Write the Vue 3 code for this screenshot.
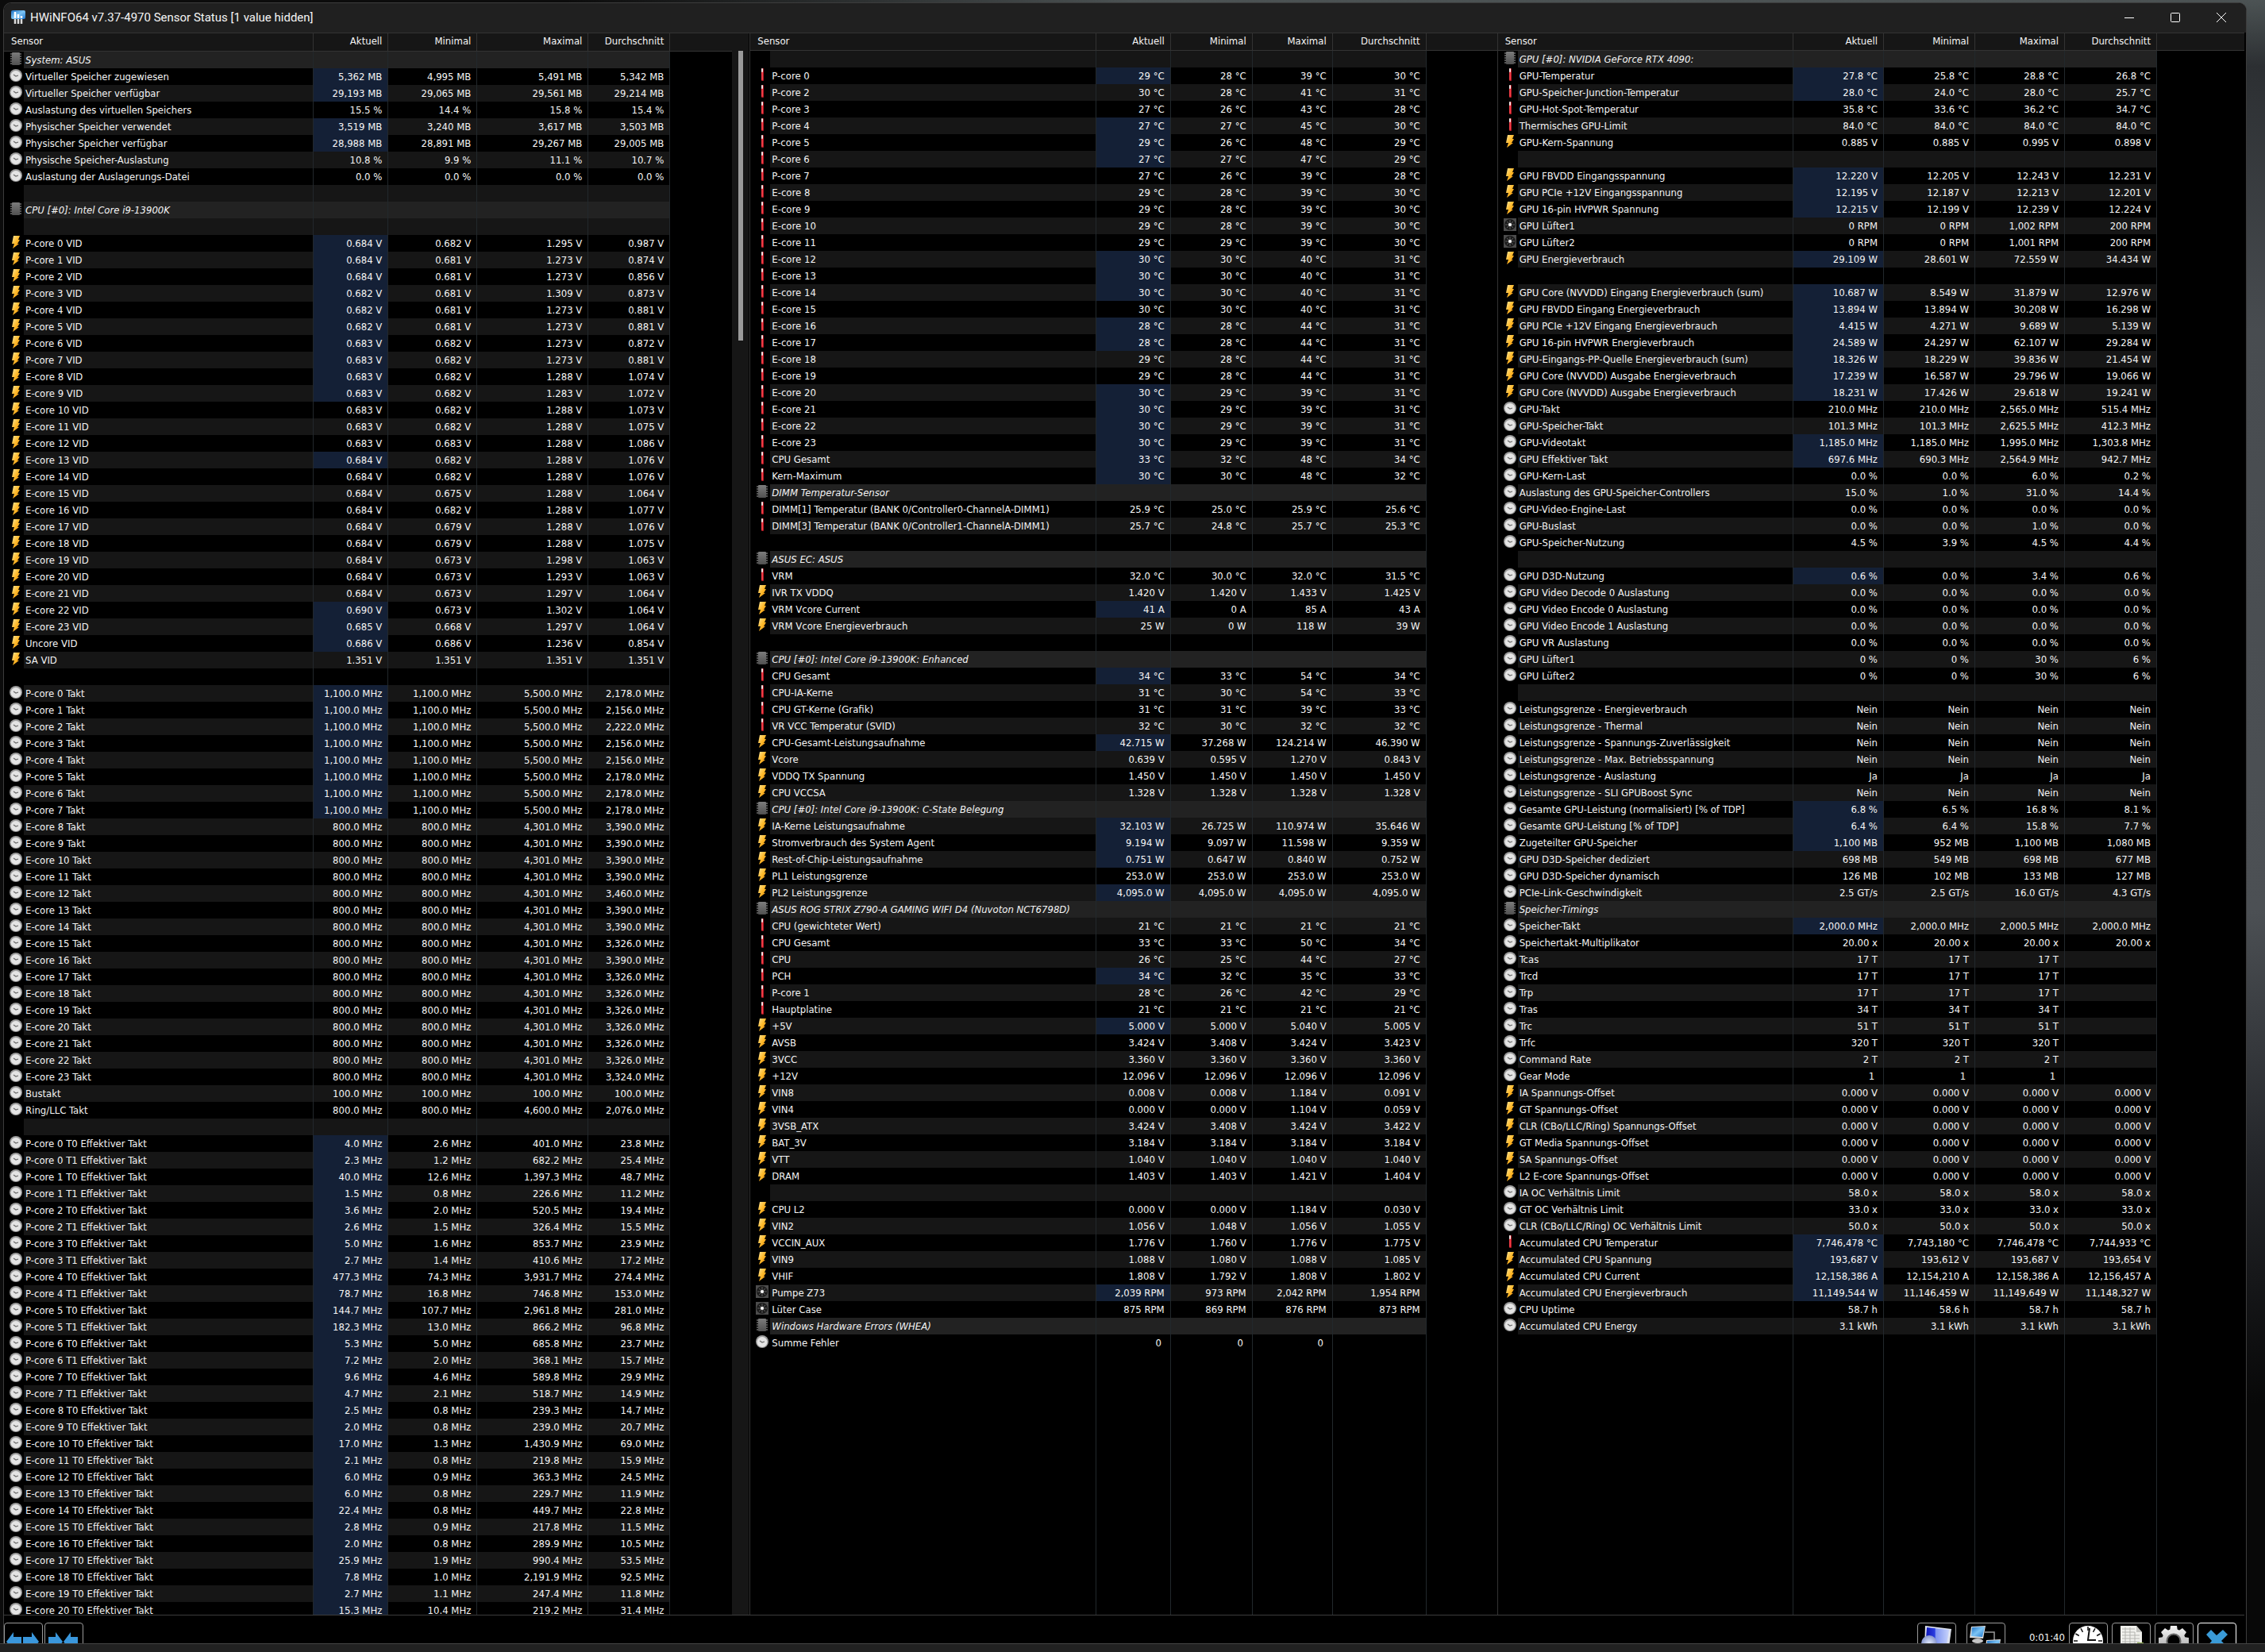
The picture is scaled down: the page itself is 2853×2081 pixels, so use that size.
<script setup>
const memory = `
g|System: ASUS
c|Virtueller Speicher zugewiesen|*5,362 MB|4,995 MB|5,491 MB|5,342 MB
c|Virtueller Speicher verfügbar|*29,193 MB|29,065 MB|29,561 MB|29,214 MB
c|Auslastung des virtuellen Speichers|15.5 %|14.4 %|15.8 %|15.4 %
c|Physischer Speicher verwendet|*3,519 MB|3,240 MB|3,617 MB|3,503 MB
c|Physischer Speicher verfügbar|*28,988 MB|28,891 MB|29,267 MB|29,005 MB
c|Physische Speicher-Auslastung|10.8 %|9.9 %|11.1 %|10.7 %
c|Auslastung der Auslagerungs-Datei|0.0 %|0.0 %|0.0 %|0.0 %
-
g|CPU [#0]: Intel Core i9-13900K
-
b|P-core 0 VID|*0.684 V|0.682 V|1.295 V|0.987 V
b|P-core 1 VID|*0.684 V|0.681 V|1.273 V|0.874 V
b|P-core 2 VID|*0.684 V|0.681 V|1.273 V|0.856 V
b|P-core 3 VID|*0.682 V|0.681 V|1.309 V|0.873 V
b|P-core 4 VID|*0.682 V|0.681 V|1.273 V|0.881 V
b|P-core 5 VID|*0.682 V|0.681 V|1.273 V|0.881 V
b|P-core 6 VID|*0.683 V|0.682 V|1.273 V|0.872 V
b|P-core 7 VID|*0.683 V|0.682 V|1.273 V|0.881 V
b|E-core 8 VID|*0.683 V|0.682 V|1.288 V|1.074 V
b|E-core 9 VID|*0.683 V|0.682 V|1.283 V|1.072 V
b|E-core 10 VID|0.683 V|0.682 V|1.288 V|1.073 V
b|E-core 11 VID|0.683 V|0.682 V|1.288 V|1.075 V
b|E-core 12 VID|0.683 V|0.683 V|1.288 V|1.086 V
b|E-core 13 VID|*0.684 V|0.682 V|1.288 V|1.076 V
b|E-core 14 VID|0.684 V|0.682 V|1.288 V|1.076 V
b|E-core 15 VID|0.684 V|0.675 V|1.288 V|1.064 V
b|E-core 16 VID|0.684 V|0.682 V|1.288 V|1.077 V
b|E-core 17 VID|0.684 V|0.679 V|1.288 V|1.076 V
b|E-core 18 VID|0.684 V|0.679 V|1.288 V|1.075 V
b|E-core 19 VID|0.684 V|0.673 V|1.298 V|1.063 V
b|E-core 20 VID|0.684 V|0.673 V|1.293 V|1.063 V
b|E-core 21 VID|0.684 V|0.673 V|1.297 V|1.064 V
b|E-core 22 VID|*0.690 V|0.673 V|1.302 V|1.064 V
b|E-core 23 VID|*0.685 V|0.668 V|1.297 V|1.064 V
b|Uncore VID|*0.686 V|0.686 V|1.236 V|0.854 V
b|SA VID|1.351 V|1.351 V|1.351 V|1.351 V
-
c|P-core 0 Takt|*1,100.0 MHz|1,100.0 MHz|5,500.0 MHz|2,178.0 MHz
c|P-core 1 Takt|*1,100.0 MHz|1,100.0 MHz|5,500.0 MHz|2,156.0 MHz
c|P-core 2 Takt|*1,100.0 MHz|1,100.0 MHz|5,500.0 MHz|2,222.0 MHz
c|P-core 3 Takt|*1,100.0 MHz|1,100.0 MHz|5,500.0 MHz|2,156.0 MHz
c|P-core 4 Takt|*1,100.0 MHz|1,100.0 MHz|5,500.0 MHz|2,156.0 MHz
c|P-core 5 Takt|*1,100.0 MHz|1,100.0 MHz|5,500.0 MHz|2,178.0 MHz
c|P-core 6 Takt|*1,100.0 MHz|1,100.0 MHz|5,500.0 MHz|2,178.0 MHz
c|P-core 7 Takt|*1,100.0 MHz|1,100.0 MHz|5,500.0 MHz|2,178.0 MHz
c|E-core 8 Takt|800.0 MHz|800.0 MHz|4,301.0 MHz|3,390.0 MHz
c|E-core 9 Takt|800.0 MHz|800.0 MHz|4,301.0 MHz|3,390.0 MHz
c|E-core 10 Takt|800.0 MHz|800.0 MHz|4,301.0 MHz|3,390.0 MHz
c|E-core 11 Takt|800.0 MHz|800.0 MHz|4,301.0 MHz|3,390.0 MHz
c|E-core 12 Takt|800.0 MHz|800.0 MHz|4,301.0 MHz|3,460.0 MHz
c|E-core 13 Takt|800.0 MHz|800.0 MHz|4,301.0 MHz|3,390.0 MHz
c|E-core 14 Takt|800.0 MHz|800.0 MHz|4,301.0 MHz|3,390.0 MHz
c|E-core 15 Takt|800.0 MHz|800.0 MHz|4,301.0 MHz|3,326.0 MHz
c|E-core 16 Takt|800.0 MHz|800.0 MHz|4,301.0 MHz|3,390.0 MHz
c|E-core 17 Takt|800.0 MHz|800.0 MHz|4,301.0 MHz|3,326.0 MHz
c|E-core 18 Takt|800.0 MHz|800.0 MHz|4,301.0 MHz|3,326.0 MHz
c|E-core 19 Takt|800.0 MHz|800.0 MHz|4,301.0 MHz|3,326.0 MHz
c|E-core 20 Takt|800.0 MHz|800.0 MHz|4,301.0 MHz|3,326.0 MHz
c|E-core 21 Takt|800.0 MHz|800.0 MHz|4,301.0 MHz|3,326.0 MHz
c|E-core 22 Takt|800.0 MHz|800.0 MHz|4,301.0 MHz|3,326.0 MHz
c|E-core 23 Takt|800.0 MHz|800.0 MHz|4,301.0 MHz|3,324.0 MHz
c|Bustakt|100.0 MHz|100.0 MHz|100.0 MHz|100.0 MHz
c|Ring/LLC Takt|800.0 MHz|800.0 MHz|4,600.0 MHz|2,076.0 MHz
-
c|P-core 0 T0 Effektiver Takt|*4.0 MHz|2.6 MHz|401.0 MHz|23.8 MHz
c|P-core 0 T1 Effektiver Takt|*2.3 MHz|1.2 MHz|682.2 MHz|25.4 MHz
c|P-core 1 T0 Effektiver Takt|*40.0 MHz|12.6 MHz|1,397.3 MHz|48.7 MHz
c|P-core 1 T1 Effektiver Takt|*1.5 MHz|0.8 MHz|226.6 MHz|11.2 MHz
c|P-core 2 T0 Effektiver Takt|*3.6 MHz|2.0 MHz|520.5 MHz|19.4 MHz
c|P-core 2 T1 Effektiver Takt|*2.6 MHz|1.5 MHz|326.4 MHz|15.5 MHz
c|P-core 3 T0 Effektiver Takt|*5.0 MHz|1.6 MHz|853.7 MHz|23.9 MHz
c|P-core 3 T1 Effektiver Takt|*2.7 MHz|1.4 MHz|410.6 MHz|17.2 MHz
c|P-core 4 T0 Effektiver Takt|*477.3 MHz|74.3 MHz|3,931.7 MHz|274.4 MHz
c|P-core 4 T1 Effektiver Takt|*78.7 MHz|16.8 MHz|746.8 MHz|153.0 MHz
c|P-core 5 T0 Effektiver Takt|*144.7 MHz|107.7 MHz|2,961.8 MHz|281.0 MHz
c|P-core 5 T1 Effektiver Takt|*182.3 MHz|13.0 MHz|866.2 MHz|96.8 MHz
c|P-core 6 T0 Effektiver Takt|*5.3 MHz|5.0 MHz|685.8 MHz|23.7 MHz
c|P-core 6 T1 Effektiver Takt|*7.2 MHz|2.0 MHz|368.1 MHz|15.7 MHz
c|P-core 7 T0 Effektiver Takt|*9.6 MHz|4.6 MHz|589.8 MHz|29.9 MHz
c|P-core 7 T1 Effektiver Takt|*4.7 MHz|2.1 MHz|518.7 MHz|14.9 MHz
c|E-core 8 T0 Effektiver Takt|*2.5 MHz|0.8 MHz|239.3 MHz|14.7 MHz
c|E-core 9 T0 Effektiver Takt|*2.0 MHz|0.8 MHz|239.0 MHz|20.7 MHz
c|E-core 10 T0 Effektiver Takt|*17.0 MHz|1.3 MHz|1,430.9 MHz|69.0 MHz
c|E-core 11 T0 Effektiver Takt|*2.1 MHz|0.8 MHz|219.8 MHz|15.9 MHz
c|E-core 12 T0 Effektiver Takt|*6.0 MHz|0.9 MHz|363.3 MHz|24.5 MHz
c|E-core 13 T0 Effektiver Takt|*6.0 MHz|0.8 MHz|229.7 MHz|11.9 MHz
c|E-core 14 T0 Effektiver Takt|*22.4 MHz|0.8 MHz|449.7 MHz|22.8 MHz
c|E-core 15 T0 Effektiver Takt|*2.8 MHz|0.9 MHz|217.8 MHz|11.5 MHz
c|E-core 16 T0 Effektiver Takt|*2.0 MHz|0.8 MHz|289.9 MHz|10.5 MHz
c|E-core 17 T0 Effektiver Takt|*25.9 MHz|1.9 MHz|990.4 MHz|53.5 MHz
c|E-core 18 T0 Effektiver Takt|*7.8 MHz|1.0 MHz|2,191.9 MHz|92.5 MHz
c|E-core 19 T0 Effektiver Takt|*2.7 MHz|1.1 MHz|247.4 MHz|11.8 MHz
c|E-core 20 T0 Effektiver Takt|*15.3 MHz|10.4 MHz|219.2 MHz|31.4 MHz
`

const board = `
-
t|P-core 0|*29 °C|28 °C|39 °C|30 °C
t|P-core 2|30 °C|28 °C|41 °C|31 °C
t|P-core 3|27 °C|26 °C|43 °C|28 °C
t|P-core 4|*27 °C|27 °C|45 °C|30 °C
t|P-core 5|*29 °C|26 °C|48 °C|29 °C
t|P-core 6|*27 °C|27 °C|47 °C|29 °C
t|P-core 7|27 °C|26 °C|39 °C|28 °C
t|E-core 8|29 °C|28 °C|39 °C|30 °C
t|E-core 9|29 °C|28 °C|39 °C|30 °C
t|E-core 10|29 °C|28 °C|39 °C|30 °C
t|E-core 11|29 °C|29 °C|39 °C|30 °C
t|E-core 12|*30 °C|30 °C|40 °C|31 °C
t|E-core 13|*30 °C|30 °C|40 °C|31 °C
t|E-core 14|*30 °C|30 °C|40 °C|31 °C
t|E-core 15|30 °C|30 °C|40 °C|31 °C
t|E-core 16|*28 °C|28 °C|44 °C|31 °C
t|E-core 17|*28 °C|28 °C|44 °C|31 °C
t|E-core 18|29 °C|28 °C|44 °C|31 °C
t|E-core 19|29 °C|28 °C|44 °C|31 °C
t|E-core 20|*30 °C|29 °C|39 °C|31 °C
t|E-core 21|*30 °C|29 °C|39 °C|31 °C
t|E-core 22|*30 °C|29 °C|39 °C|31 °C
t|E-core 23|*30 °C|29 °C|39 °C|31 °C
t|CPU Gesamt|*33 °C|32 °C|48 °C|34 °C
t|Kern-Maximum|*30 °C|30 °C|48 °C|32 °C
g|DIMM Temperatur-Sensor
t|DIMM[1] Temperatur (BANK 0/Controller0-ChannelA-DIMM1)|25.9 °C|25.0 °C|25.9 °C|25.6 °C
t|DIMM[3] Temperatur (BANK 0/Controller1-ChannelA-DIMM1)|25.7 °C|24.8 °C|25.7 °C|25.3 °C
-
g|ASUS EC: ASUS
t|VRM|32.0 °C|30.0 °C|32.0 °C|31.5 °C
b|IVR TX VDDQ|1.420 V|1.420 V|1.433 V|1.425 V
b|VRM Vcore Current|*41 A|0 A|85 A|43 A
b|VRM Vcore Energieverbrauch|25 W|0 W|118 W|39 W
-
g|CPU [#0]: Intel Core i9-13900K: Enhanced
t|CPU Gesamt|*34 °C|33 °C|54 °C|34 °C
t|CPU-IA-Kerne|31 °C|30 °C|54 °C|33 °C
t|CPU GT-Kerne (Grafik)|31 °C|31 °C|39 °C|33 °C
t|VR VCC Temperatur (SVID)|32 °C|30 °C|32 °C|32 °C
b|CPU-Gesamt-Leistungsaufnahme|*42.715 W|37.268 W|124.214 W|46.390 W
b|Vcore|0.639 V|0.595 V|1.270 V|0.843 V
b|VDDQ TX Spannung|1.450 V|1.450 V|1.450 V|1.450 V
b|CPU VCCSA|1.328 V|1.328 V|1.328 V|1.328 V
g|CPU [#0]: Intel Core i9-13900K: C-State Belegung
b|IA-Kerne Leistungsaufnahme|*32.103 W|26.725 W|110.974 W|35.646 W
b|Stromverbrauch des System Agent|*9.194 W|9.097 W|11.598 W|9.359 W
b|Rest-of-Chip-Leistungsaufnahme|*0.751 W|0.647 W|0.840 W|0.752 W
b|PL1 Leistungsgrenze|253.0 W|253.0 W|253.0 W|253.0 W
b|PL2 Leistungsgrenze|*4,095.0 W|4,095.0 W|4,095.0 W|4,095.0 W
g|ASUS ROG STRIX Z790-A GAMING WIFI D4 (Nuvoton NCT6798D)
t|CPU (gewichteter Wert)|21 °C|21 °C|21 °C|21 °C
t|CPU Gesamt|33 °C|33 °C|50 °C|34 °C
t|CPU|26 °C|25 °C|44 °C|27 °C
t|PCH|*34 °C|32 °C|35 °C|33 °C
t|P-core 1|28 °C|26 °C|42 °C|29 °C
t|Hauptplatine|21 °C|21 °C|21 °C|21 °C
b|+5V|*5.000 V|5.000 V|5.040 V|5.005 V
b|AVSB|3.424 V|3.408 V|3.424 V|3.423 V
b|3VCC|3.360 V|3.360 V|3.360 V|3.360 V
b|+12V|12.096 V|12.096 V|12.096 V|12.096 V
b|VIN8|0.008 V|0.008 V|1.184 V|0.091 V
b|VIN4|0.000 V|0.000 V|1.104 V|0.059 V
b|3VSB_ATX|3.424 V|3.408 V|3.424 V|3.422 V
b|BAT_3V|3.184 V|3.184 V|3.184 V|3.184 V
b|VTT|1.040 V|1.040 V|1.040 V|1.040 V
b|DRAM|1.403 V|1.403 V|1.421 V|1.404 V
-
b|CPU L2|0.000 V|0.000 V|1.184 V|0.030 V
b|VIN2|1.056 V|1.048 V|1.056 V|1.055 V
b|VCCIN_AUX|1.776 V|1.760 V|1.776 V|1.775 V
b|VIN9|1.088 V|1.080 V|1.088 V|1.085 V
b|VHIF|1.808 V|1.792 V|1.808 V|1.802 V
f|Pumpe Z73|*2,039 RPM|973 RPM|2,042 RPM|1,954 RPM
f|Lüter Case|875 RPM|869 RPM|876 RPM|873 RPM
g|Windows Hardware Errors (WHEA)
c|Summe Fehler|0 |0 |0 |
`

const gpu = `
g|GPU [#0]: NVIDIA GeForce RTX 4090:
t|GPU-Temperatur|*27.8 °C|25.8 °C|28.8 °C|26.8 °C
t|GPU-Speicher-Junction-Temperatur|*28.0 °C|24.0 °C|28.0 °C|25.7 °C
t|GPU-Hot-Spot-Temperatur|35.8 °C|33.6 °C|36.2 °C|34.7 °C
t|Thermisches GPU-Limit|84.0 °C|84.0 °C|84.0 °C|84.0 °C
b|GPU-Kern-Spannung|0.885 V|0.885 V|0.995 V|0.898 V
-
b|GPU FBVDD Eingangsspannung|*12.220 V|12.205 V|12.243 V|12.231 V
b|GPU PCIe +12V Eingangsspannung|*12.195 V|12.187 V|12.213 V|12.201 V
b|GPU 16-pin HVPWR Spannung|*12.215 V|12.199 V|12.239 V|12.224 V
f|GPU Lüfter1|0 RPM|0 RPM|1,002 RPM|200 RPM
f|GPU Lüfter2|0 RPM|0 RPM|1,001 RPM|200 RPM
b|GPU Energieverbrauch|*29.109 W|28.601 W|72.559 W|34.434 W
-
b|GPU Core (NVVDD) Eingang Energieverbrauch (sum)|*10.687 W|8.549 W|31.879 W|12.976 W
b|GPU FBVDD Eingang Energieverbrauch|*13.894 W|13.894 W|30.208 W|16.298 W
b|GPU PCIe +12V Eingang Energieverbrauch|*4.415 W|4.271 W|9.689 W|5.139 W
b|GPU 16-pin HVPWR Energieverbrauch|*24.589 W|24.297 W|62.107 W|29.284 W
b|GPU-Eingangs-PP-Quelle Energieverbrauch (sum)|*18.326 W|18.229 W|39.836 W|21.454 W
b|GPU Core (NVVDD) Ausgabe Energieverbrauch|*17.239 W|16.587 W|29.796 W|19.066 W
b|GPU Core (NVVDD) Ausgabe Energieverbrauch|*18.231 W|17.426 W|29.618 W|19.241 W
c|GPU-Takt|210.0 MHz|210.0 MHz|2,565.0 MHz|515.4 MHz
c|GPU-Speicher-Takt|101.3 MHz|101.3 MHz|2,625.5 MHz|412.3 MHz
c|GPU-Videotakt|*1,185.0 MHz|1,185.0 MHz|1,995.0 MHz|1,303.8 MHz
c|GPU Effektiver Takt|*697.6 MHz|690.3 MHz|2,564.9 MHz|942.7 MHz
c|GPU-Kern-Last|0.0 %|0.0 %|6.0 %|0.2 %
c|Auslastung des GPU-Speicher-Controllers|15.0 %|1.0 %|31.0 %|14.4 %
c|GPU-Video-Engine-Last|0.0 %|0.0 %|0.0 %|0.0 %
c|GPU-Buslast|0.0 %|0.0 %|1.0 %|0.0 %
c|GPU-Speicher-Nutzung|4.5 %|3.9 %|4.5 %|4.4 %
-
c|GPU D3D-Nutzung|*0.6 %|0.0 %|3.4 %|0.6 %
c|GPU Video Decode 0 Auslastung|0.0 %|0.0 %|0.0 %|0.0 %
c|GPU Video Encode 0 Auslastung|0.0 %|0.0 %|0.0 %|0.0 %
c|GPU Video Encode 1 Auslastung|0.0 %|0.0 %|0.0 %|0.0 %
c|GPU VR Auslastung|0.0 %|0.0 %|0.0 %|0.0 %
c|GPU Lüfter1|0 %|0 %|30 %|6 %
c|GPU Lüfter2|0 %|0 %|30 %|6 %
-
c|Leistungsgrenze - Energieverbrauch|Nein|Nein|Nein|Nein
c|Leistungsgrenze - Thermal|Nein|Nein|Nein|Nein
c|Leistungsgrenze - Spannungs-Zuverlässigkeit|Nein|Nein|Nein|Nein
c|Leistungsgrenze - Max. Betriebsspannung|Nein|Nein|Nein|Nein
c|Leistungsgrenze - Auslastung|Ja|Ja|Ja|Ja
c|Leistungsgrenze - SLI GPUBoost Sync|Nein|Nein|Nein|Nein
c|Gesamte GPU-Leistung (normalisiert) [% of TDP]|*6.8 %|6.5 %|16.8 %|8.1 %
c|Gesamte GPU-Leistung [% of TDP]|*6.4 %|6.4 %|15.8 %|7.7 %
c|Zugeteilter GPU-Speicher|*1,100 MB|952 MB|1,100 MB|1,080 MB
c|GPU D3D-Speicher dediziert|698 MB|549 MB|698 MB|677 MB
c|GPU D3D-Speicher dynamisch|126 MB|102 MB|133 MB|127 MB
c|PCIe-Link-Geschwindigkeit|2.5 GT/s|2.5 GT/s|16.0 GT/s|4.3 GT/s
g|Speicher-Timings
c|Speicher-Takt|*2,000.0 MHz|2,000.0 MHz|2,000.5 MHz|2,000.0 MHz
c|Speichertakt-Multiplikator|20.00 x|20.00 x|20.00 x|20.00 x
c|Tcas|17 T|17 T|17 T|
c|Trcd|17 T|17 T|17 T|
c|Trp|17 T|17 T|17 T|
c|Tras|34 T|34 T|34 T|
c|Trc|51 T|51 T|51 T|
c|Trfc|320 T|320 T|320 T|
c|Command Rate|2 T|2 T|2 T|
c|Gear Mode|1 |1 |1 |
b|IA Spannungs-Offset|0.000 V|0.000 V|0.000 V|0.000 V
b|GT Spannungs-Offset|0.000 V|0.000 V|0.000 V|0.000 V
b|CLR (CBo/LLC/Ring) Spannungs-Offset|0.000 V|0.000 V|0.000 V|0.000 V
b|GT Media Spannungs-Offset|0.000 V|0.000 V|0.000 V|0.000 V
b|SA Spannungs-Offset|0.000 V|0.000 V|0.000 V|0.000 V
b|L2 E-core Spannungs-Offset|0.000 V|0.000 V|0.000 V|0.000 V
c|IA OC Verhältnis Limit|58.0 x|58.0 x|58.0 x|58.0 x
c|GT OC Verhältnis Limit|33.0 x|33.0 x|33.0 x|33.0 x
c|CLR (CBo/LLC/Ring) OC Verhältnis Limit|50.0 x|50.0 x|50.0 x|50.0 x
t|Accumulated CPU Temperatur|*7,746,478 °C|7,743,180 °C|7,746,478 °C|7,744,933 °C
b|Accumulated CPU Spannung|*193,687 V|193,612 V|193,687 V|193,654 V
b|Accumulated CPU Current|*12,158,386 A|12,154,210 A|12,158,386 A|12,156,457 A
b|Accumulated CPU Energieverbrauch|*11,149,544 W|11,146,459 W|11,149,649 W|11,148,327 W
c|CPU Uptime|58.7 h|58.6 h|58.7 h|58.7 h
c|Accumulated CPU Energy|3.1 kWh|3.1 kWh|3.1 kWh|3.1 kWh
`

const icons = { g: 'chip', c: 'clock', b: 'bolt', t: 'thermo', f: 'fan' }

function parse(text) {
  return text
    .split('\n')
    .filter((line) => line !== '')
    .map((line) => {
      const [kind, name = '', ...cells] = line.split('|')
      return {
        icon: icons[kind],
        group: kind === 'g',
        name,
        changed: (cells[0] || '').startsWith('*'),
        values: [0, 1, 2, 3].map((i) => (cells[i] || '').replace('*', '')),
      }
    })
}

const panels = [
  { id: 'one', rows: parse(memory), scroll: true },
  { id: 'two', rows: parse(board), scroll: false },
  { id: 'three', rows: parse(gpu), scroll: false },
]
const headings = ['Aktuell', 'Minimal', 'Maximal', 'Durchschnitt']
</script>

<template>
  <div class="desktop">
    <svg class="defs" aria-hidden="true">
      <defs>
        <linearGradient id="gold" x1="0" y1="0" x2="1" y2="1">
          <stop offset="0" stop-color="#ffe79a" />
          <stop offset=".5" stop-color="#ffb92a" />
          <stop offset="1" stop-color="#e88a0c" />
        </linearGradient>
        <linearGradient id="metal" x1="0" y1="0" x2="0" y2="1">
          <stop offset="0" stop-color="#7c7c7c" />
          <stop offset="1" stop-color="#505050" />
        </linearGradient>
        <linearGradient id="sky" x1="0" y1="0" x2="1" y2="1">
          <stop offset="0" stop-color="#1b6fc4" />
          <stop offset=".5" stop-color="#7cc4f4" />
          <stop offset="1" stop-color="#1c74cc" />
        </linearGradient>
        <linearGradient id="screen" x1="0" y1="0" x2="1" y2="0">
          <stop offset="0" stop-color="#0a12b4" />
          <stop offset=".4" stop-color="#2b3ee0" />
          <stop offset=".45" stop-color="#7f95f2" />
          <stop offset="1" stop-color="#c8d4fb" />
        </linearGradient>
        <linearGradient id="steel" x1="0" y1="0" x2="0" y2="1">
          <stop offset="0" stop-color="#f2f2f2" />
          <stop offset="1" stop-color="#9a9a9a" />
        </linearGradient>
        <radialGradient id="globe">
          <stop offset="0" stop-color="#e4ecff" />
          <stop offset="1" stop-color="#8696cc" />
        </radialGradient>
      </defs>
      <symbol id="chip" viewBox="0 0 16 16">
        <path d="M1 2h14M1 5h14M1 8h14M1 11h14M1 14h14" stroke="#a8a8a8" stroke-width="1" />
        <rect x="3" y="0" width="10" height="16" rx="1" fill="url(#metal)" />
      </symbol>
      <symbol id="clock" viewBox="0 0 16 16">
        <circle cx="8" cy="8" r="8" fill="#9a9a9a" />
        <circle cx="8" cy="8.500" r="6.500" fill="#e4e4e4" />
        <path d="M5 7 8 9l3-1" fill="none" stroke="#6a6a6a" stroke-width="1.200" />
      </symbol>
      <symbol id="bolt" viewBox="0 0 16 16">
        <path d="M5 0h8L11 5h2L10 10h2L4 16l2-6H3Z" fill="url(#gold)" />
      </symbol>
      <symbol id="thermo" viewBox="0 0 16 16">
        <rect x="7" y="0" width="3" height="16" rx="1" fill="#b01822" />
        <rect x="7" y="3" width="2" height="12" rx="1" fill="#f03c46" />
        <rect x="7" y="0" width="2" height="5" rx="1" fill="#f4e6e6" />
      </symbol>
      <symbol id="fan" viewBox="0 0 16 16">
        <rect width="16" height="16" fill="#4c4c4c" />
        <circle cx="8" cy="8" r="7" fill="#1c1c1c" />
        <path d="M8 2v12M2 8h12M4 4l8 8M12 4l-8 8" stroke="#5c5c5c" stroke-width="1" />
        <circle cx="8" cy="8" r="2" fill="#fff" />
      </symbol>
    </svg>

    <main class="window">
      <header class="titlebar">
        <svg class="logo" viewBox="0 0 18 18" aria-hidden="true">
          <rect width="18" height="11" rx="2" fill="url(#sky)" />
          <path d="M5 2v8M9 5v5M13 7v3" stroke="#fff" stroke-width="2.500" />
          <path d="M5 11v6M9 11v6M13 11v6" stroke="#dcdcdc" stroke-width="2.500" />
        </svg>
        <h1>HWiNFO64 v7.37-4970 Sensor Status [1 value hidden]</h1>
        <div class="controls">
          <button type="button" aria-label="Minimieren">
            <svg viewBox="0 0 14 14"><path d="M1 7.500h12" /></svg>
          </button>
          <button type="button" aria-label="Maximieren">
            <svg viewBox="0 0 14 14"><rect x="1.500" y="1.500" width="11" height="11" rx="1" /></svg>
          </button>
          <button type="button" aria-label="Schließen">
            <svg viewBox="0 0 14 14"><path d="m1 1 12 12M13 1 1 13" /></svg>
          </button>
        </div>
      </header>

      <div class="panels">
        <section v-for="panel in panels" :key="panel.id" class="panel" :class="panel.id">
          <div class="view">
            <table>
              <colgroup>
                <col class="c-icon" /><col class="c-name" />
                <col class="c-now" /><col class="c-min" /><col class="c-max" /><col class="c-avg" />
                <col class="c-rest" />
              </colgroup>
              <thead>
                <tr>
                  <th colspan="2" scope="col" class="sensor">Sensor</th>
                  <th v-for="h in headings" :key="h" scope="col">{{ h }}</th>
                  <td class="rest"></td>
                </tr>
              </thead>
              <tbody>
                <tr v-for="(row, i) in panel.rows" :key="i" :class="{ group: row.group }">
                  <td class="icon">
                    <svg v-if="row.icon" aria-hidden="true"><use :href="'#' + row.icon" /></svg>
                  </td>
                  <th scope="row" class="name">{{ row.name }}</th>
                  <td
                    v-for="(value, n) in row.values"
                    :key="n"
                    class="value"
                    :class="{ changed: n === 0 && row.changed }"
                  >{{ value }}</td>
                  <td class="rest"></td>
                </tr>
                <tr v-if="!panel.scroll" class="fill">
                  <td class="icon"></td><td></td>
                  <td v-for="n in 4" :key="n"></td>
                  <td class="rest"></td>
                </tr>
              </tbody>
            </table>
          </div>
          <div v-if="panel.scroll" class="track"><div class="thumb"></div></div>
        </section>
      </div>

      <footer class="toolbar">
        <button type="button" class="narrow" aria-label="Spalten verbreitern">
          <svg viewBox="0 0 46 44">
            <path d="M2 22 11 10v6h10v12H11v6zM43 22 34 10v6H23v12h11v6z" fill="#3a97dc" />
          </svg>
        </button>
        <button type="button" class="narrow" aria-label="Spalten verkleinern">
          <svg viewBox="0 0 46 44">
            <path d="M22 22 13 10v6H4v12h9v6zM23 22 32 10v6h9v12h-9v6z" fill="#3a97dc" />
          </svg>
        </button>
        <span class="spacer"></span>
        <button type="button" class="wide" aria-label="Übersicht">
          <svg viewBox="0 0 46 44">
            <path d="m9 2 33 4-4 30-30-4z" fill="#dfe3ee" />
            <path d="m11 4 28 3-4 26-26-3z" fill="url(#screen)" />
            <circle cx="14" cy="24" r="10" fill="url(#globe)" />
          </svg>
        </button>
        <button type="button" aria-label="Netzwerk">
          <svg viewBox="0 0 46 44">
            <path d="M22 10h12v12" fill="none" stroke="#999" stroke-width="1.500" />
            <ellipse cx="13" cy="21" rx="7" ry="3" fill="#c4c4c4" />
            <path d="m5 3 18-1-3 16-17-1z" fill="#dcdcdc" />
            <path d="m6 4 16-1-3 13-14-1z" fill="url(#sky)" />
            <path d="m24 20 18-1-2 14-17-1z" fill="#dcdcdc" />
            <path d="m25 21 16-1-2 12-14-1z" fill="url(#sky)" />
          </svg>
        </button>
        <time>0:01:40</time>
        <button type="button" aria-label="Uhr zurücksetzen">
          <svg viewBox="0 0 46 44">
            <circle cx="23" cy="21" r="19" fill="#fff" />
            <path d="M23 3v5M23 34v5M5 21h5M36 21h5M14 5.400l2.500 4.400M32 5.400l-2.500 4.400M7.400 12l4.400 2.500M38.600 12l-4.400 2.500" stroke="#111" stroke-width="1.500" />
            <path d="M25 5 23 20H33" fill="none" stroke="#111" stroke-width="2" />
          </svg>
        </button>
        <button type="button" aria-label="Protokoll">
          <svg viewBox="0 0 46 44">
            <path d="M10 2h20l7 8v32H10z" fill="#f0f0ec" />
            <path d="M30 2v8h7z" fill="#c4c4c0" />
            <path d="M12 6h16M12 10h16M12 14h22M12 18h22M12 22h22M12 26h22M16 4v30M22 4v30M28 10v24" stroke="#b4b4b0" stroke-width="1" />
            <path d="M31 23h8v12h-8z" fill="#8fae4e" />
          </svg>
        </button>
        <button type="button" aria-label="Einstellungen">
          <svg viewBox="0 0 46 44">
            <g fill="url(#steel)">
              <circle cx="23" cy="21" r="15" />
              <path d="M19 2h8l1 7H18zM19 40h8l1-7H18zM4 17v8l7 1V16zM42 17v8l-7 1V16z" />
              <path d="m7 10 5-5 6 4-7 7zM39 10l-5-5-6 4 7 7zM7 32l5 5 6-4-7-7zM39 32l-5 5-6-4 7-7z" />
            </g>
            <circle cx="23" cy="21" r="8" fill="#000" />
            <circle cx="23" cy="21" r="8.500" fill="none" stroke="#666" stroke-width="2" />
          </svg>
        </button>
        <button type="button" class="close" aria-label="Schließen">
          <svg viewBox="0 0 46 44">
            <path d="m10 13 6-6 7 7 8-7 6 6-8 8 8 8-6 6-8-7-7 7-6-6 7-8z" fill="#3a9bd8" />
          </svg>
        </button>
      </footer>
    </main>
    <div class="taskbar"></div>
  </div>
</template>

<style>
body {
  margin: 0;
  background: #000;
}
</style>

<style scoped>
* {
  box-sizing: border-box;
}
.desktop {
  display: flex;
  flex-direction: column;
  height: 100vh;
  overflow: hidden;
  font-family: 'DejaVu Sans Condensed', 'Noto Sans', sans-serif;
  font-size: 13px;
  color: #f4f4f4;
  background:
    linear-gradient(90deg, #0c0c0c 25%, #0c0c0c00 50%),
    linear-gradient(180deg, #4c5354, #2c2f32 4%, #484c50 20%, #4c5054 55%, #24262a 70%, #080808 85%);
}
.defs {
  position: absolute;
  width: 0;
  height: 0;
}
.window {
  flex: 1;
  min-height: 0;
  margin: 3px 23px 0 4px;
  border: 1px solid #3c3c3c;
  border-bottom: 0;
  border-radius: 10px 10px 0 0;
  background: #000;
  display: flex;
  flex-direction: column;
  overflow: hidden;
}
.titlebar {
  height: 37px;
  flex: none;
  display: flex;
  align-items: center;
  gap: 6px;
  padding: 0 2px 2px 9px;
  background: #202020;
}
.logo {
  width: 18px;
  height: 18px;
}
h1 {
  flex: 1;
  margin: 0;
  font: 400 15px Roboto, 'Noto Sans', sans-serif;
}
.controls {
  display: flex;
}
.controls button {
  width: 58px;
  height: 34px;
  padding: 0;
  border: 0;
  background: none;
}
.controls svg {
  width: 14px;
  height: 14px;
  display: block;
  margin: auto;
  fill: none;
  stroke: #fff;
}
.panels {
  flex: 1;
  min-height: 0;
  display: flex;
  margin-right: 2px;
  border-bottom: 1px solid #3c3c3c;
}
.panel {
  flex: 941 1 0;
  min-width: 0;
  display: flex;
  border-top: 1px solid #333;
  border-left: 1px solid #333;
  overflow: hidden;
}
.panel.one {
  flex-grow: 940;
  border-left: 0;
}
.view {
  flex: 1;
  min-width: 0;
  overflow: hidden;
}
table {
  width: 100%;
  height: 100%;
  table-layout: fixed;
  border-collapse: separate;
  border-spacing: 0;
}
.c-icon { width: 25px; }
.one .c-now, .two .c-now { width: 94px; }
.one .c-min { width: 112px; }
.one .c-max { width: 140px; }
.one .c-avg { width: 103px; }
.one .c-rest { width: 78px; }
.two .c-min { width: 103px; }
.two .c-max { width: 101px; }
.two .c-avg { width: 118px; }
.two .c-rest { width: 89px; }
.three .c-now { width: 114px; }
.three .c-min { width: 115px; }
.three .c-max { width: 113px; }
.three .c-avg { width: 116px; }
.three .c-rest { width: 110px; }
th,
td {
  height: 21px;
  padding: 0 7px 0 0;
  line-height: 20px;
  font-weight: 400;
  text-align: right;
  white-space: pre;
  overflow: hidden;
  border-right: 1px solid #22282c;
}
thead th,
thead td {
  height: 22px;
  padding-bottom: 2px;
  line-height: 18px;
  background: #161616;
  border-bottom: 1px solid #333;
  border-right-color: #333;
}
.one thead th,
.one thead td {
  height: 23px;
}
thead th.sensor {
  text-align: left;
  padding-left: 9px;
}
tbody td.icon {
  padding: 1px 0 0 7px;
  line-height: 0;
  text-align: left;
  vertical-align: top;
  border: 0;
}
td.icon svg {
  width: 16px;
  height: 16px;
}
th.name {
  text-align: left;
  padding-left: 2px;
}
td.rest,
thead td.rest {
  border-right: 0;
}
tbody tr:nth-child(odd) .name,
tbody tr:nth-child(odd) .value {
  background: #161616;
}
tbody tr.group .name,
tbody tr.group .value {
  background: #222;
  font-style: italic;
}
tbody tr .value.changed {
  background: #142036;
}
tbody tr.fill td {
  height: auto;
}
.track {
  width: 22px;
  border-right: 1px solid #000;
  background: #161616;
  padding: 22px 8px 0;
}
.thumb {
  width: 6px;
  height: 365px;
  background: #9a9a9a;
}
.toolbar {
  height: 35px;
  flex: none;
  display: flex;
  align-items: flex-start;
  gap: 5px;
  padding: 9px 12px 0 0;
  overflow: hidden;
}
.toolbar button {
  width: 49px;
  height: 48px;
  flex: none;
  padding: 0;
  border: 1px solid #9a9a9a;
  border-radius: 4px;
  background: #000;
}
.toolbar .narrow {
  margin-right: -3px;
}
.toolbar svg {
  display: block;
  width: 46px;
  height: 44px;
}
.toolbar .wide {
  margin-right: 8px;
}
.toolbar .close {
  border-color: #fff;
}
.spacer {
  flex: 1;
}
time {
  width: 70px;
  line-height: 38px;
  text-align: right;
}
.taskbar {
  height: 11px;
  flex: none;
  border-top: 1px solid #444;
  background: #212121;
}
</style>
